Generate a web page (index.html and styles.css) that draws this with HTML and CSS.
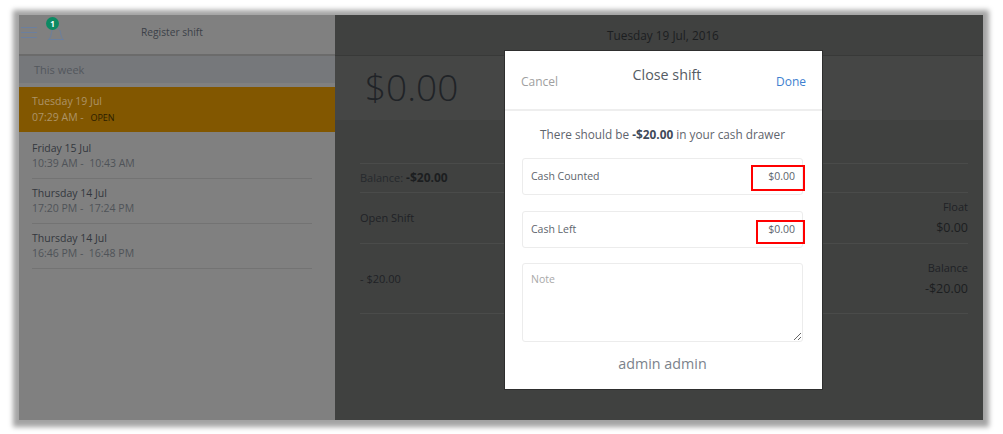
FILE: index.html
```html
<!DOCTYPE html>
<html lang="en">
<head>
  <meta charset="UTF-8" />
  <title>Register shift</title>
  <link rel="stylesheet" href="styles.css">
</head>
<body>
  <div class="frame">

    <!-- Shift list -->
    <div class="sidebar">
      <div class="side-header">
        <svg class="menu-icon" width="16" height="11" viewBox="0 0 16 11" fill="none" stroke="#6b7f9e" stroke-width="1">
          <path d="M0 .5H16M0 5.500H16M0 10.500H16" />
        </svg>
        <svg class="bell-icon" width="16" height="13" viewBox="0 0 16 13" fill="none" stroke="#6b7f9e" stroke-width="1">
          <path d="M.5 12.500H15.500C13.500 11 13 9 12.500 5.500C12 2 10 .5 8 .5C6 .5 4 2 3.500 5.500C3 9 2.500 11 .5 12.500Z" />
        </svg>
        <span class="badge">1</span>
        <span class="side-title">Register shift</span>
      </div>
      <div class="week">This week</div>
      <ul class="shifts">
        <li class="shift active">
          <div>Tuesday 19 Jul</div>
          <div>07:29 AM - <span class="open">OPEN</span></div>
        </li>
        <li class="shift">
          <div class="day">Friday 15 Jul</div>
          <div>10:39 AM - &nbsp;10:43 AM</div>
        </li>
        <li class="shift">
          <div class="day">Thursday 14 Jul</div>
          <div>17:20 PM - &nbsp;17:24 PM</div>
        </li>
        <li class="shift">
          <div class="day">Thursday 14 Jul</div>
          <div>16:46 PM - &nbsp;16:48 PM</div>
        </li>
      </ul>
    </div>

    <!-- Shift detail -->
    <div class="main">
      <div class="main-header">Tuesday 19 Jul, 2016</div>
      <div class="total">$0.00</div>
      <div class="details">
        <div class="row balance">Balance: <b>-$20.00</b></div>
        <div class="row entry">
          <div class="entry-left">Open Shift</div>
          <div class="entry-right">
            <div>Float</div>
            <div class="amount">$0.00</div>
          </div>
        </div>
        <div class="row entry">
          <div class="entry-left">- $20.00</div>
          <div class="entry-right">
            <div>Balance</div>
            <div class="amount">-$20.00</div>
          </div>
        </div>
      </div>
    </div>

    <!-- Close shift dialog -->
    <div class="modal">
      <div class="modal-header">
        <span class="cancel">Cancel</span>
        <span class="modal-title">Close shift</span>
        <span class="done">Done</span>
      </div>
      <div class="modal-body">
        <p class="expected">There should be <b>-$20.00</b> in your cash drawer</p>
        <div class="field">
          <span>Cash Counted</span>
          <span class="value">$0.00</span>
          <span class="mark mark-counted"></span>
        </div>
        <div class="field">
          <span>Cash Left</span>
          <span class="value">$0.00</span>
          <span class="mark mark-left"></span>
        </div>
        <textarea class="note" placeholder="Note"></textarea>
        <div class="user">admin admin</div>
      </div>
    </div>

  </div>
</body>
</html>
```

FILE: styles.css
```css
* {
  box-sizing: border-box;
}

body {
  margin: 0;
  padding: 15px 20px 14px 19px;
  height: 434px;
  background: white;
  font-family: "Open Sans", sans-serif;
  overflow: hidden;
}

/* Window */
.frame {
  position: relative;
  display: flex;
  height: 405px;
  box-shadow: 0 1px 5px 6px rgba(0,0,0,0.36);
}

/* Sidebar */
.sidebar {
  width: 316px;
  background: #808080;
  color: #3d4249;
  font-size: 11px;
}

.side-header {
  position: relative;
  height: 41px;
  display: flex;
  align-items: center;
  justify-content: center;
  border-bottom: 2px solid #6b6b6b;
  padding: 0 10px 6px 0;
}

.menu-icon {
  position: absolute;
  left: 2px;
  top: 12px;
}

.bell-icon {
  position: absolute;
  left: 29px;
  top: 12px;
}

.badge {
  position: absolute;
  left: 27px;
  top: 2px;
  width: 13px;
  height: 13px;
  border-radius: 50%;
  background: #0b8a63;
  color: white;
  font-size: 8px;
  font-weight: 700;
  line-height: 13px;
  text-align: center;
}

.side-title {
  color: #3c4048;
  font-size: 10.200px;
}

.week {
  height: 27px;
  padding: 0 15px;
  background: #76787b;
  color: #53575d;
  font-size: 11px;
  line-height: 27px;
}

.shifts {
  list-style: none;
  margin: 4px 0 0;
  padding: 0;
}

.shift {
  height: 45px;
  margin: 0 23px 0 13px;
  padding-top: 7px;
  border-bottom: 1px solid #737373;
  color: #4f5358;
  font-size: 10.500px;
  line-height: 15px;
}

.shift .day {
  color: #33373d;
}

.shift.active {
  height: 45px;
  margin: 0 0 2px;
  padding: 6px 0 0 13px;
  background: #825700;
  border-bottom: none;
  color: #ad9468;
  line-height: 16px;
}

.open {
  margin-left: 4px;
  color: #2b1d00;
  font-size: 9px;
}

/* Main panel */
.main {
  flex: 1;
  background: #404140;
  color: #1f2226;
  font-size: 11px;
}

.main-header {
  height: 41px;
  padding-left: 8px;
  border-bottom: 1px solid #383938;
  color: #1c1e20;
  font-size: 11.800px;
  line-height: 40px;
  text-align: center;
}

.total {
  height: 64px;
  padding-left: 30px;
  background: #454645;
  color: #202327;
  font-size: 37px;
  font-weight: 300;
  line-height: 62px;
}

.details {
  margin: 43px 15px 0 25px;
}

.row {
  border-top: 1px solid #4a4b4a;
}

.balance {
  height: 29px;
  line-height: 28px;
  color: #26292d;
}

.balance b {
  color: #1c1e20;
  font-size: 12px;
}

.entry {
  display: flex;
  justify-content: space-between;
  height: 51px;
}

.entry + .entry {
  height: 71px;
  border-bottom: 1px solid #4a4b4a;
}

.entry-left {
  padding-top: 17px;
}

.entry + .entry .entry-left {
  padding-top: 27px;
}

.entry-right {
  padding-top: 6px;
  text-align: right;
  line-height: 16px;
}

.entry + .entry .entry-right {
  padding-top: 16px;
}

.amount {
  margin-top: 5px;
  color: #1c1e20;
  font-size: 12.500px;
}

/* Modal */
.modal {
  position: absolute;
  left: 486px;
  top: 36px;
  width: 317px;
  height: 338px;
  background: white;
  box-shadow: 0 0 0 1px #2e2e2e;
}

.modal-header {
  display: flex;
  justify-content: space-between;
  height: 60px;
  padding: 0 16px;
  border-bottom: 2px solid #eeeeee;
}

.cancel, .done {
  padding-top: 22px;
  font-size: 12px;
}

.cancel {
  color: #a0a0a0;
}

.done {
  color: #3d7fd0;
}

.modal-title {
  padding-top: 14px;
  color: #555b63;
  font-size: 14.300px;
}

.modal-body {
  padding: 0 19px 0 17px;
}

.expected {
  margin: 13px 0 14px;
  color: #5f656d;
  font-size: 11.800px;
  line-height: 20px;
  text-align: center;
}

.expected b {
  color: #3f4a5a;
}

.field {
  position: relative;
  display: flex;
  justify-content: space-between;
  align-items: center;
  height: 37px;
  margin-bottom: 16px;
  padding: 0 7px 1px 8px;
  border: 1px solid #ececec;
  border-radius: 3px;
  color: #5d646c;
  font-size: 10.500px;
}

.value {
  color: #5d646c;
}

/* Red annotation boxes from the screenshot */
.mark {
  position: absolute;
  top: 6px;
  height: 26px;
  border: 2px solid #ff0000;
}

.mark-counted {
  right: -3px;
  width: 54px;
}

.mark-left {
  top: 8px;
  height: 24px;
  right: -3px;
  width: 49px;
}

.note {
  display: block;
  width: 100%;
  height: 79px;
  padding: 8px;
  margin-top: -1px;
  border: 1px solid #ececec;
  border-radius: 3px;
  font-family: "Open Sans", sans-serif;
  font-size: 10.500px;
  outline: none;
}

.note::placeholder {
  color: #a9a9a9;
}

.user {
  margin-top: 12px;
  color: #7b828b;
  font-size: 14.300px;
  text-align: center;
}
```
